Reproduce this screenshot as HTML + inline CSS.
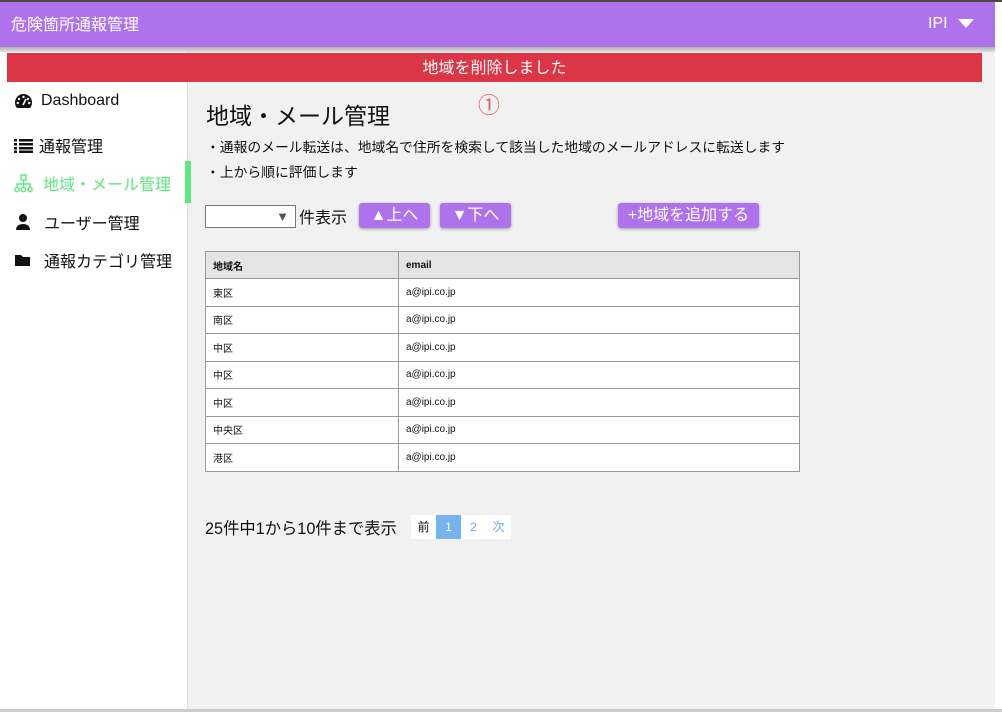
<!DOCTYPE html>
<html><head><meta charset="utf-8"><style>
*{margin:0;padding:0;box-sizing:border-box}
body{width:1002px;height:712px;overflow:hidden;background:#fff;font-family:"Liberation Sans","Noto Sans CJK JP",sans-serif;position:relative}
.top{position:absolute;left:0;top:0;width:1002px;height:2px;background:#4a4a4a}
.hdr{position:absolute;left:0;top:2px;width:995px;height:45px;background:#ae72ec;color:#fff}
.hdr .t{position:absolute;left:11px;top:9px;font-size:16px}
.hdr .u{position:absolute;left:928px;top:13px;font-size:16px}
.hdr .tri{position:absolute;left:958px;top:17px;width:0;height:0;border-left:8px solid transparent;border-right:8px solid transparent;border-top:9px solid #fff}
.shadow{position:absolute;left:0;top:47px;width:995px;height:5px;background:linear-gradient(#b0b0b0,#e0e0e0)}
.main{position:absolute;left:0;top:52px;width:995px;height:658px;background:#f1f1f1}
.side{position:absolute;left:0;top:52px;width:188px;height:658px;background:#fff;border-right:1px solid #ddd}
.bottom{position:absolute;left:0;top:709px;width:1002px;height:3px;background:#ccc}
.banner{position:absolute;left:7px;top:53px;width:975px;height:29px;background:#dc3545;color:#fff;font-size:16px;text-align:center;line-height:31px}
.nav{position:absolute;left:14px;font-size:16px;color:#111;display:flex;align-items:center}
.nav svg{margin-right:8px}
.act{color:#5ce77f}
.bar{position:absolute;left:185px;top:161px;width:6px;height:42px;background:#5ce77f}
h1{position:absolute;left:206px;top:97px;font-size:23px;font-weight:normal;color:#111}
.c1{position:absolute;left:478px;top:88px;color:#f05a5a;font-size:22px}
.p{position:absolute;left:206px;font-size:13.8px;color:#111}
.sel{position:absolute;left:205px;top:205px;width:91px;height:23px;background:#fff;border:1px solid #777}
.sel span{position:absolute;right:6px;top:3px;font-size:13px;color:#555}
.btn{position:absolute;top:203px;height:25px;background:#ae72ec;color:#fff;font-size:16px;border-radius:3px;box-shadow:0 1px 3px rgba(0,0,0,.35);text-align:center;line-height:25px}
table{position:absolute;left:205px;top:251px;width:595px;border-collapse:collapse;font-size:10px;color:#111;background:#fff}
td,th{border:1px solid #999;height:27.5px;padding-left:7px;text-align:left;vertical-align:middle}
th{background:#e4e4e4;font-weight:bold;height:27px}
td:first-child,th:first-child{width:193px}
.pg{position:absolute;left:205px;top:515px;font-size:16.3px;color:#111}
.pgb{position:absolute;top:515px;height:24px;width:25px;text-align:center;line-height:24px;font-size:12px;background:#fff;color:#6aaeea}
</style></head><body>
<div class="top"></div>
<div class="main"></div>
<div class="side"></div>
<div class="bottom"></div>
<div class="hdr"><div class="t">危険箇所通報管理</div><div class="u">IPI</div><div class="tri"></div></div>
<div class="shadow"></div>
<div class="banner">地域を削除しました</div>
<div class="nav" style="top:92px"><svg width="19" height="16" viewBox="0 0 19 16"><path d="M9.5 1A8.5 8.5 0 0 0 1 9.5C1 12 2 14 3 15h13c1-1 2-3 2-5.5A8.5 8.5 0 0 0 9.5 1z" fill="#111"/><circle cx="9.5" cy="4" r="1.2" fill="#fff"/><circle cx="5" cy="6" r="1.2" fill="#fff"/><circle cx="14" cy="6" r="1.2" fill="#fff"/><circle cx="3.8" cy="10" r="1.2" fill="#fff"/><circle cx="15.2" cy="10" r="1.2" fill="#fff"/><path d="M9 12l3-6" stroke="#fff" stroke-width="1.6"/></svg>Dashboard</div>
<div class="nav" style="top:133px"><svg width="19" height="15" viewBox="0 0 19 15"><g fill="#111"><rect x="0" y="1" width="3" height="2.5"/><rect x="5" y="1" width="14" height="2.5"/><rect x="0" y="5" width="3" height="2.5"/><rect x="5" y="5" width="14" height="2.5"/><rect x="0" y="9" width="3" height="2.5"/><rect x="5" y="9" width="14" height="2.5"/><rect x="0" y="12.5" width="3" height="2.5"/><rect x="5" y="12.5" width="14" height="2.5"/></g></svg><span style="margin-left:-2px">通報管理</span></div>
<div class="nav act" style="top:171px"><svg width="19" height="19" viewBox="0 0 19 19" fill="none" stroke="#5ce77f" stroke-width="1.4"><rect x="7" y="1" width="5" height="5"/><path d="M9.5 6v4M3 13v-3h13v3M9.5 10v3"/><circle cx="3" cy="15.5" r="2.2"/><circle cx="9.5" cy="15.5" r="2.2"/><circle cx="16" cy="15.5" r="2.2"/></svg><span style="margin-left:2px">地域・メール管理</span></div>
<div class="bar"></div>
<div class="nav" style="top:210px"><svg width="18" height="18" viewBox="0 0 18 18" fill="#111"><circle cx="9" cy="5" r="4"/><path d="M2 17c0-4 3-6 7-6s7 2 7 6z"/></svg><span style="margin-left:4px">ユーザー管理</span></div>
<div class="nav" style="top:248px"><svg width="18" height="16" viewBox="0 0 18 16" fill="#111"><path d="M1 3h6l2 2h7v9H1z"/></svg><span style="margin-left:4px">通報カテゴリ管理</span></div>
<h1>地域・メール管理</h1>
<div class="c1">①</div>
<div class="p" style="top:136px">・通報のメール転送は、地域名で住所を検索して該当した地域のメールアドレスに転送します</div>
<div class="p" style="top:161px">・上から順に評価します</div>
<div class="sel"><span>▼</span></div>
<div class="p" style="top:204px;left:299px;font-size:16px">件表示</div>
<div class="btn" style="left:359px;width:71px">▲上へ</div>
<div class="btn" style="left:440px;width:71px">▼下へ</div>
<div class="btn" style="left:618px;width:141px">+地域を追加する</div>
<table>
<tr><th>地域名</th><th>email</th></tr>
<tr><td>東区</td><td>a@ipi.co.jp</td></tr>
<tr><td>南区</td><td>a@ipi.co.jp</td></tr>
<tr><td>中区</td><td>a@ipi.co.jp</td></tr>
<tr><td>中区</td><td>a@ipi.co.jp</td></tr>
<tr><td>中区</td><td>a@ipi.co.jp</td></tr>
<tr><td>中央区</td><td>a@ipi.co.jp</td></tr>
<tr><td>港区</td><td>a@ipi.co.jp</td></tr>
</table>
<div class="pg">25件中1から10件まで表示</div>
<div class="pgb" style="left:411px;color:#111">前</div>
<div class="pgb" style="left:436px;background:#76b4ee;color:#fff">1</div>
<div class="pgb" style="left:461px">2</div>
<div class="pgb" style="left:486px">次</div>
</body></html>
